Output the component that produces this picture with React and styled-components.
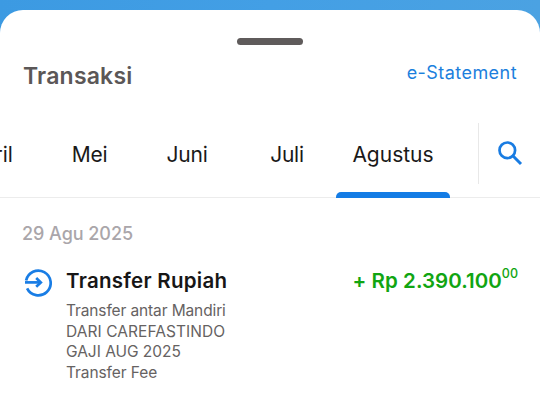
import React from "react";
import styled, { createGlobalStyle } from "styled-components";

const GlobalStyle = createGlobalStyle`
  * { box-sizing: border-box; }
  body {
    margin: 0;
    overflow: hidden;
    background: #fff;
    font-family: Inter, "Liberation Sans", sans-serif;
  }
`;

const Screen = styled.div`
  width: 540px;
  height: 409px;
  padding-top: 10px;
  overflow: hidden;
  background: linear-gradient(90deg, #3c9ae2, #439fe5 50%, #4ba2e2);
`;

const Sheet = styled.main`
  display: flex;
  flex-direction: column;
  height: 399px;
  padding-top: 28px;
  border-radius: 23px 23px 0 0;
  background: #fff;
`;

const Handle = styled.div`
  flex: none;
  align-self: center;
  width: 66px;
  height: 7px;
  border-radius: 3.5px;
  background: #5f5b5b;
`;

const Header = styled.header`
  display: flex;
  justify-content: space-between;
  align-items: flex-start;
  height: 78px;
  padding: 15px 23px 0;
`;

const Title = styled.h1`
  margin: 0;
  font-size: 23px;
  font-weight: 600;
  line-height: 32px;
  letter-spacing: 0.2px;
  color: #5b5757;
`;

const StatementLink = styled.a`
  font-size: 18px;
  line-height: 26px;
  letter-spacing: 0.45px;
  color: #1c7fdd;
`;

const TabBar = styled.nav`
  display: flex;
  height: 75px;
  border-bottom: 1px solid #ececec;
`;

const Tabs = styled.div`
  display: flex;
  justify-content: flex-end;
  width: 450px;
  height: 75px;
  overflow: hidden;
`;

const Tab = styled.div`
  display: flex;
  flex: none;
  flex-direction: column;
  justify-content: space-between;
  align-items: center;
  width: ${(p) => p.$width}px;
  padding-top: 17px;
  font-size: 21px;
  line-height: 30px;
  letter-spacing: ${(p) => p.$spacing ?? 0}px;
  color: #1a1919;
`;

const Indicator = styled.div`
  width: 114px;
  height: 6px;
  border-radius: 5px 5px 0 0;
  background: #147ce5;
`;

const SearchButton = styled.div`
  display: flex;
  justify-content: center;
  align-items: center;
  width: 62px;
  height: 61px;
  margin-left: 28px;
  padding-bottom: 2px;
  border-left: 1px solid #e8e8e8;
`;

const Day = styled.h2`
  margin: 24px 0 0 22px;
  font-size: 18px;
  font-weight: 500;
  line-height: 24px;
  letter-spacing: -0.05px;
  color: #aaa6aa;
`;

const Transaction = styled.section`
  display: flex;
  align-items: flex-start;
  margin-top: 21px;
  padding: 0 22px 0 24px;
`;

const Direction = styled.svg`
  flex: none;
  width: 28px;
  height: 28px;
  margin: 2px 14px 0 0;
`;

const Details = styled.div`
  flex: 1;
`;

const Name = styled.h3`
  margin: 0 0 6px;
  font-size: 20.5px;
  font-weight: 600;
  line-height: 28px;
  letter-spacing: 0.28px;
  color: #171616;
`;

const Line = styled.div`
  font-size: 15.5px;
  line-height: 20.5px;
  letter-spacing: ${(p) => p.$spacing ?? 0}px;
  color: #666262;
  white-space: nowrap;
`;

const Amount = styled.div`
  display: flex;
  font-size: 20.5px;
  font-weight: 600;
  line-height: 28px;
  letter-spacing: 0.05px;
  color: #11a512;
  white-space: nowrap;
`;

const Cents = styled.span`
  padding-top: 1px;
  font-size: 12.5px;
  font-weight: 500;
  line-height: 12px;
  letter-spacing: 0;
`;

const months = [
  { name: "April", width: 106, spacing: 0 },
  { name: "Mei", width: 93, spacing: -0.2 },
  { name: "Juni", width: 102, spacing: -0.2 },
  { name: "Juli", width: 98, spacing: -0.3 },
  { name: "Agustus", width: 114, spacing: 0, active: true },
];

const lines = [
  { text: "Transfer antar Mandiri", spacing: -0.12 },
  { text: "DARI CAREFASTINDO", spacing: 0.06 },
  { text: "GAJI AUG 2025", spacing: -0.03 },
  { text: "Transfer Fee", spacing: -0.08 },
];

export default function App() {
  return (
    <>
      <GlobalStyle />
      <Screen>
        <Sheet>
          <Handle />
          <Header>
            <Title>Transaksi</Title>
            <StatementLink>e-Statement</StatementLink>
          </Header>
          <TabBar>
            <Tabs>
              {months.map((m) => (
                <Tab key={m.name} $width={m.width} $spacing={m.spacing}>
                  {m.name}
                  {m.active && <Indicator />}
                </Tab>
              ))}
            </Tabs>
            <SearchButton>
              <svg width="26" height="26" viewBox="0 0 26 26" fill="none" stroke="#197ce2">
                <circle cx="10.3" cy="10.3" r="7.8" strokeWidth="2.7" />
                <path d="M15.8 15.8 24 24" strokeWidth="3" />
              </svg>
            </SearchButton>
          </TabBar>
          <Day>29 Agu 2025</Day>
          <Transaction>
            <Direction viewBox="0 0 28 28" fill="none" stroke="#197de5" strokeWidth="2.7">
              <path d="M2.1 11.6A12.4 12.4 0 1 1 3.1 19.4" />
              <path d="M1 13.4H16.5" />
              <path d="M12.2 9 16.8 13.4 12.2 17.8" />
            </Direction>
            <Details>
              <Name>Transfer Rupiah</Name>
              {lines.map((l) => (
                <Line key={l.text} $spacing={l.spacing}>{l.text}</Line>
              ))}
            </Details>
            <Amount>
              + Rp 2.390.100<Cents>00</Cents>
            </Amount>
          </Transaction>
        </Sheet>
      </Screen>
    </>
  );
}
